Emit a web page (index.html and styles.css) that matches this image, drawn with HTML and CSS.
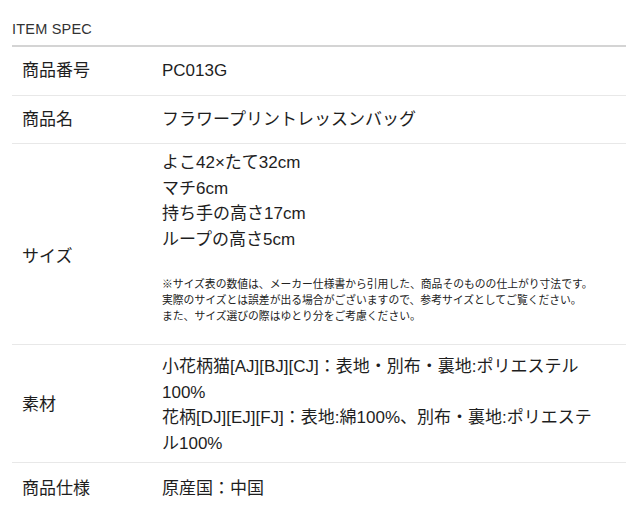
FILE: index.html
```html
<!DOCTYPE html>
<html lang="ja">
<head>
<meta charset="utf-8">
<link rel="stylesheet" href="styles.css">
</head>
<body>
<section class="spec">
  <h2 class="spec-title">ITEM SPEC</h2>
  <div class="spec-table">
    <div class="row row-first">
      <div class="label">商品番号</div>
      <div class="value">PC013G</div>
    </div>
    <div class="row row-second">
      <div class="label">商品名</div>
      <div class="value">フラワープリントレッスンバッグ</div>
    </div>
    <div class="row row-size">
      <div class="label label-size">サイズ</div>
      <div class="value">
        <p class="lines">よこ42×たて32cm<br>マチ6cm<br>持ち手の高さ17cm<br>ループの高さ5cm</p>
        <p class="note">※サイズ表の数値は、メーカー仕様書から引用した、商品そのものの仕上がり寸法です。<br>実際のサイズとは誤差が出る場合がございますので、参考サイズとしてご覧ください。<br>また、サイズ選びの際はゆとり分をご考慮ください。</p>
      </div>
    </div>
    <div class="row row-material">
      <div class="label">素材</div>
      <div class="value value-material">小花柄猫[AJ][BJ][CJ]：表地・別布・裏地:ポリエステル100%<br>花柄[DJ][EJ][FJ]：表地:綿100%、別布・裏地:ポリエステル100%</div>
    </div>
    <div class="row row-last">
      <div class="label">商品仕様</div>
      <div class="value">原産国：中国</div>
    </div>
  </div>
</section>
</body>
</html>
```

FILE: styles.css
```css
html, body {
  margin: 0;
  padding: 0;
  background: #fff;
}
body {
  font-family: "Liberation Sans", "Noto Sans CJK JP", sans-serif;
  color: #1e1e1e;
}
.spec {
  padding: 0 14px 0 12px;
}
.spec-title {
  margin: 0;
  padding-top: 20px;
  height: 25px;
  font-size: 14.5px;
  font-weight: normal;
  line-height: 18px;
  color: #333;
  letter-spacing: 0.2px;
  border-bottom: 2px solid #d4d4d4;
  box-sizing: content-box;
}
.spec-table {
  display: flex;
  flex-direction: column;
}
.row {
  display: grid;
  grid-template-columns: 150px 1fr;
  border-bottom: 1px solid #e8e8e8;
  font-size: 17px;
  line-height: 25.5px;
  box-sizing: border-box;
}
.label {
  padding-left: 10px;
  align-self: center;
}
.value {
  padding-right: 8px;
  align-self: center;
}
.value-material {
  padding-right: 24px;
}
.row-first {
  height: 49px;
}
.row-second {
  height: 48px;
}
.row-size {
  height: 201px;
  padding-top: 6px;
}
.row-size .value {
  align-self: start;
}
.label-size {
  padding-top: 19px;
}
.lines {
  margin: 0;
}
.note {
  margin: 24px 0 0;
  font-size: 10.8px;
  line-height: 16px;
  color: #222;
}
.row-material {
  height: 118px;
  padding-top: 3px;
}
.row-last {
  height: 60px;
  border-bottom: none;
  padding-top: 13px;
}
.row-last .label, .row-last .value {
  align-self: start;
}
```
